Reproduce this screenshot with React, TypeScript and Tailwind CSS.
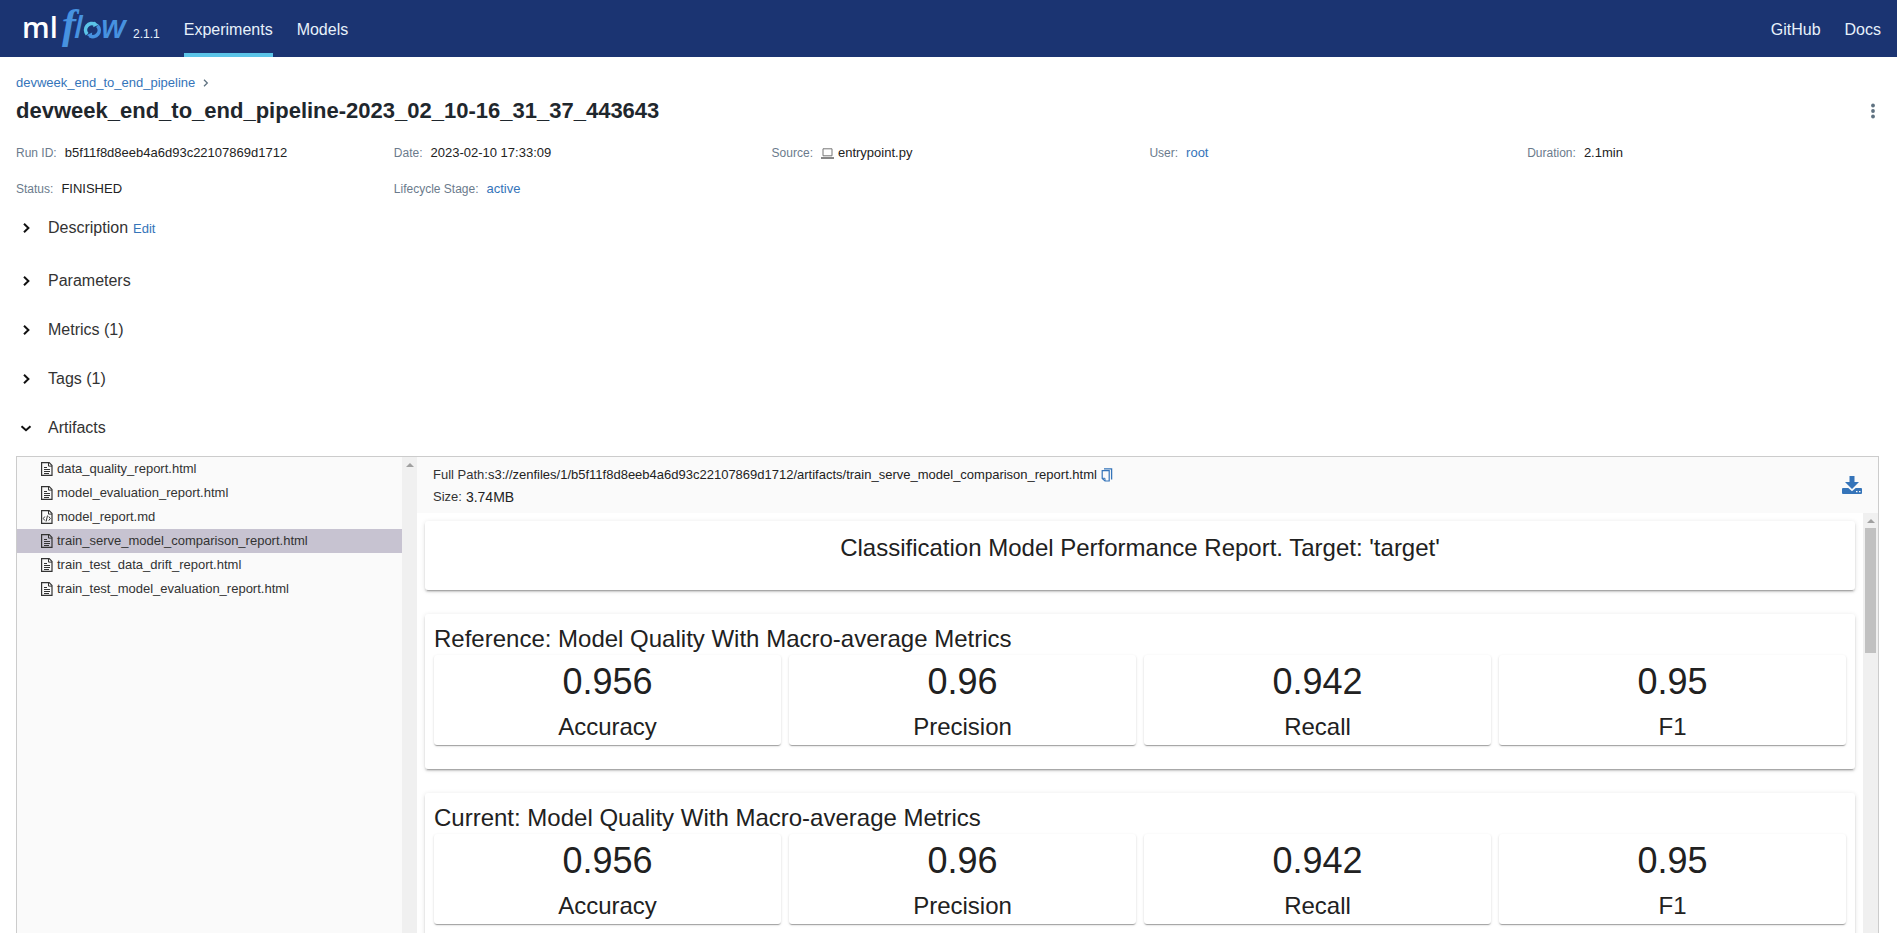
import React from "react";

const metrics = [
  { value: "0.956", label: "Accuracy" },
  { value: "0.96", label: "Precision" },
  { value: "0.942", label: "Recall" },
  { value: "0.95", label: "F1" },
];

const files = [
  { name: "data_quality_report.html", code: false },
  { name: "model_evaluation_report.html", code: false },
  { name: "model_report.md", code: true },
  { name: "train_serve_model_comparison_report.html", code: false },
  { name: "train_test_data_drift_report.html", code: false },
  { name: "train_test_model_evaluation_report.html", code: false },
];

const selectedFile = "train_serve_model_comparison_report.html";

function Logo() {
  return (
    <svg width="109" height="57" viewBox="0 0 109 57" className="overflow-visible" role="img" aria-label="mlflow">
      <text x="0" y="38" fontFamily="Open Sans, sans-serif" fontWeight="600" fontSize="29" fill="#fff">
        ml
      </text>
      <g fill="#4792e0" fontFamily="Open Sans, sans-serif" fontStyle="italic">
        <text x="40" y="38" fontFamily="Liberation Serif, serif" fontSize="42" fontWeight="700">
          f
        </text>
        <text x="52" y="38" fontSize="31" fontWeight="600">
          l
        </text>
        <text x="79" y="38" fontSize="33" fontWeight="600">
          w
        </text>
      </g>
      <g fill="none" strokeWidth="3.6">
        <path d="M65.2 34.2A6.4 6.4 0 0 1 73.2 24.4" stroke="#5bc4e8" />
        <path d="M75.4 25.8A6.4 6.4 0 0 1 67.6 35.8" stroke="#4792e0" />
      </g>
      <path d="M72 21.4l4.600 3.400-5.400 2.400z" fill="#5bc4e8" />
      <path d="M69.400 38.400l-4.600-3.400 5.400-2.400z" fill="#4792e0" />
    </svg>
  );
}

function Chevron({ open = false }: { open?: boolean }) {
  return (
    <svg width="12" height="12" viewBox="0 0 12 12" fill="none" stroke="#111" strokeWidth="2" aria-hidden="true">
      {open ? <path d="M1.5 4.2 6 8.2l4.500-4" /> : <path d="M4 1.800 8.400 6 4 10.200" />}
    </svg>
  );
}

function FileIcon({ code }: { code: boolean }) {
  return (
    <svg width="12" height="14" viewBox="0 0 12 14" fill="none" stroke="#333" aria-hidden="true">
      <path d="M.6.6h7.600l2.800 2.800v9.900H.6z" strokeWidth="1.200" />
      <path d="M7.500.6v3.500H11" />
      {code ? (
        <path d="M3.800 6.500 2.300 8.500l1.500 2M7.800 6.500l1.500 2-1.500 2M6.500 5.500l-1.400 6" />
      ) : (
        <path d="M3 5.500h3M3 7.500h6M3 9.500h6M3 11.500h5" />
      )}
    </svg>
  );
}

function Section({ title, open = false }: { title: string; open?: boolean }) {
  return (
    <button type="button" aria-expanded={open} className="flex h-[25px] items-center gap-4 pl-1 text-left text-base">
      <Chevron open={open} />
      {title}
    </button>
  );
}

function Detail({ label, children }: { label: string; children: React.ReactNode }) {
  return (
    <div className="flex h-5 items-center gap-2">
      <dt className="text-xs text-[#6b7b8c]">{label}:</dt>
      <dd className="flex items-center gap-1 text-[13px] text-[#222]">{children}</dd>
    </div>
  );
}

function ScrollArrow() {
  return (
    <svg width="8" height="4" viewBox="0 0 8 4" fill="#a0a0a0" aria-hidden="true">
      <path d="M0 4 4 0l4 4z" />
    </svg>
  );
}

const cardShadow =
  "rounded-[3px] bg-white shadow-[0_2px_1px_-1px_rgba(0,0,0,0.2),0_1px_1px_0_rgba(0,0,0,0.14),0_1px_3px_0_rgba(0,0,0,0.12)]";
const panelShadow =
  "rounded-[3px] bg-white shadow-[0_3px_1px_-2px_rgba(0,0,0,0.2),0_2px_2px_0_rgba(0,0,0,0.14),0_1px_5px_0_rgba(0,0,0,0.12)]";

function QualityPanel({ title }: { title: string }) {
  return (
    <section className={`${panelShadow} shrink-0 px-[9px] pt-[9px] pb-6`}>
      <h3 className="text-2xl leading-8">{title}</h3>
      <div className="grid grid-cols-4 gap-2">
        {metrics.map((m) => (
          <div key={m.label} className={`${cardShadow} h-[90px] text-center`}>
            <div className="pt-1 text-4xl leading-[46px]">{m.value}</div>
            <div className="pt-[6px] text-2xl leading-8">{m.label}</div>
          </div>
        ))}
      </div>
    </section>
  );
}

export default function App() {
  return (
    <div className="flex h-screen flex-col overflow-hidden bg-white font-['Liberation_Sans',sans-serif] text-[#333]">
      <header className="flex h-[57px] shrink-0 items-stretch justify-between bg-[#1b3472] px-4 text-base text-[#e7f1fb]">
        <div className="flex items-stretch">
          <a href="#home" className="flex items-start pl-[6px]">
            <Logo />
            <span className="pt-[26px] pl-[2px] text-xs leading-4">2.1.1</span>
          </a>
          <nav className="ml-6 flex gap-6">
            <a href="#experiments" className="flex items-center border-b-4 border-[#5bc4e8] pt-[6px]">
              Experiments
            </a>
            <a href="#models" className="flex items-center pt-[2px]">
              Models
            </a>
          </nav>
        </div>
        <nav className="flex items-center gap-6 pt-[2px]">
          <a href="#github">GitHub</a>
          <a href="#docs">Docs</a>
        </nav>
      </header>

      <main className="flex min-h-0 flex-1 flex-col px-4 pt-4">
        <div className="flex h-5 shrink-0 items-center gap-2 text-[13px]">
          <a href="#pipeline" className="text-[#3574b9]">
            devweek_end_to_end_pipeline
          </a>
          <svg width="6" height="8" viewBox="0 0 6 8" fill="none" stroke="#5f7281" strokeWidth="1.300" aria-hidden="true">
            <path d="M1 .8 4.300 4 1 7.200" />
          </svg>
        </div>
        <div className="flex h-[34px] shrink-0 items-center justify-between">
          <h1 className="text-[22px] font-bold text-[#1f272d]">devweek_end_to_end_pipeline-2023_02_10-16_31_37_443643</h1>
          <button type="button" aria-label="More actions" className="px-[6px] pt-[2px]">
            <svg width="4" height="16" viewBox="0 0 4 16" fill="#5f7281" aria-hidden="true">
              <circle cx="2" cy="2.500" r="1.900" />
              <circle cx="2" cy="8" r="1.900" />
              <circle cx="2" cy="13.500" r="1.900" />
            </svg>
          </button>
        </div>

        <dl className="mt-4 -mr-6 grid shrink-0 grid-cols-5 gap-y-4">
          <Detail label="Run ID">b5f11f8d8eeb4a6d93c22107869d1712</Detail>
          <Detail label="Date">2023-02-10 17:33:09</Detail>
          <Detail label="Source">
            <svg width="13" height="11" viewBox="0 0 13 11" aria-hidden="true">
              <path d="M2 .8h9v7H2z" fill="none" stroke="#777" />
              <path d="M0 9h13v2H0z" fill="#888" />
            </svg>
            entrypoint.py
          </Detail>
          <Detail label="User">
            <a href="#root" className="text-[#3574b9]">
              root
            </a>
          </Detail>
          <Detail label="Duration">2.1min</Detail>
          <Detail label="Status">FINISHED</Detail>
          <Detail label="Lifecycle Stage">
            <a href="#active" className="text-[#3574b9]">
              active
            </a>
          </Detail>
        </dl>

        <div className="mt-4 flex shrink-0 items-center gap-[5px]">
          <Section title="Description" />
          <button type="button" className="pt-[2px] text-[13px] text-[#3574b9]">
            Edit
          </button>
        </div>
        <div className="mt-7 flex shrink-0 flex-col gap-6">
          <Section title="Parameters" />
          <Section title="Metrics (1)" />
          <Section title="Tags (1)" />
          <Section title="Artifacts" open />
        </div>

        <div className="mt-4 mr-[2px] flex min-h-0 flex-1 overflow-hidden border border-b-0 border-[#ccc]">
          <aside className="flex w-[400px] shrink-0 bg-[#fafafa]">
            <ul className="flex-1 text-[13px]">
              {files.map((f) => (
                <li key={f.name} className={f.name === selectedFile ? "bg-[#c7c3d1]" : ""}>
                  <button type="button" className="flex h-6 w-full items-center gap-1 pl-6 text-left">
                    <FileIcon code={f.code} />
                    {f.name}
                  </button>
                </li>
              ))}
            </ul>
            <div className="flex w-[15px] justify-center bg-[#f0f0f0] pt-[6px]">
              <ScrollArrow />
            </div>
          </aside>

          <div className="flex min-w-0 flex-1 flex-col">
            <div className="flex h-14 shrink-0 items-center justify-between bg-[#fafafa] px-4 text-[13px]">
              <div className="pt-[2px]">
                <div className="flex h-[22px] items-center">
                  <span>Full Path:</span>
                  <span className="text-[#222]">
                    s3://zenfiles/1/b5f11f8d8eeb4a6d93c22107869d1712/artifacts/train_serve_model_comparison_report.html
                  </span>
                  <button type="button" aria-label="Copy path" className="ml-1">
                    <svg width="12" height="14" viewBox="0 0 12 14" fill="none" stroke="#3574b9" aria-hidden="true">
                      <path d="M3 .8h7.600v10.700" strokeWidth="1.300" />
                      <path d="M1.200 2.700h7v10.300H4L1.200 10.500z" strokeWidth="1.200" />
                      <path d="M1.200 10.300H4v2.700" />
                    </svg>
                  </button>
                </div>
                <div className="flex h-[22px] items-center gap-1">
                  <span>Size:</span>
                  <span className="text-sm text-[#222]">3.74MB</span>
                </div>
              </div>
              <button type="button" aria-label="Download artifact">
                <svg width="20" height="18" viewBox="0 0 20 18" fill="#3574b9" aria-hidden="true">
                  <path d="M7.500 0h5v6H17l-7 7-7-7h4.500z" />
                  <path
                    fillRule="evenodd"
                    d="M1 12h5.300l3.700 3.200 3.700-3.200H19a1 1 0 0 1 1 1v4a1 1 0 0 1-1 1H1a1 1 0 0 1-1-1v-4a1 1 0 0 1 1-1zM14 15v1.300h1.500V15zM17 15v1.300h1.500V15z"
                  />
                </svg>
              </button>
            </div>

            <div className="flex min-h-0 flex-1">
              <div className="flex min-w-0 flex-1 flex-col gap-6 overflow-hidden p-2 text-[#212121]">
                <section className={`${panelShadow} h-[69px] shrink-0 pt-[11px] text-center`}>
                  <h2 className="text-2xl leading-8">Classification Model Performance Report. Target: 'target'</h2>
                </section>
                <QualityPanel title="Reference: Model Quality With Macro-average Metrics" />
                <QualityPanel title="Current: Model Quality With Macro-average Metrics" />
              </div>
              <div className="flex w-[15px] flex-col items-center gap-[5px] bg-[#f0f0f0] pt-[6px]">
                <ScrollArrow />
                <div className="h-[125px] w-[11px] bg-[#c1c1c1]" />
              </div>
            </div>
          </div>
        </div>
      </main>
    </div>
  );
}
